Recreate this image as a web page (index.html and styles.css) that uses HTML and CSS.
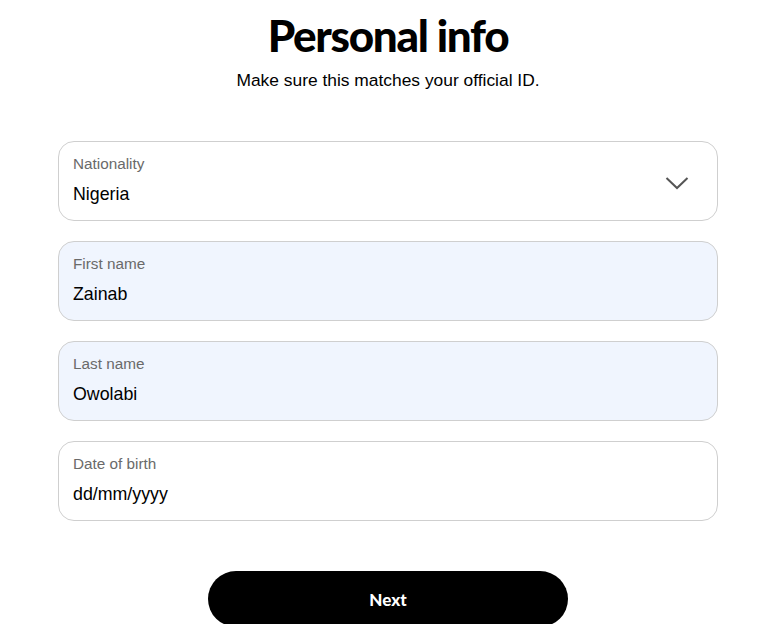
FILE: index.html
```html
<!DOCTYPE html>
<html lang="en">
<head>
<meta charset="utf-8">
<title>Personal info</title>
<link rel="stylesheet" href="styles.css">
</head>
<body>
<main class="page">
  <header class="intro">
    <h1 class="title">Personal info</h1>
    <p class="subtitle">Make sure this matches your official ID.</p>
  </header>
  <form class="form">
    <div class="field">
      <div class="field-text">
        <span class="label">Nationality</span>
        <span class="value">Nigeria</span>
      </div>
      <svg class="chevron" width="24" height="14" viewBox="0 0 24 14" aria-hidden="true">
        <path d="M1.5 2 L12 12 L22.5 2" fill="none" stroke="#555" stroke-width="2"/>
      </svg>
    </div>
    <div class="field filled">
      <div class="field-text">
        <span class="label">First name</span>
        <span class="value">Zainab</span>
      </div>
    </div>
    <div class="field filled">
      <div class="field-text">
        <span class="label">Last name</span>
        <span class="value">Owolabi</span>
      </div>
    </div>
    <div class="field">
      <div class="field-text">
        <span class="label">Date of birth</span>
        <span class="value">dd/mm/yyyy</span>
      </div>
    </div>
    <div class="actions">
      <button type="button" class="next">Next</button>
    </div>
  </form>
</main>
</body>
</html>
```

FILE: styles.css
```css
* { box-sizing: border-box; }
html, body { margin: 0; padding: 0; background: #fff; }
body {
  font-family: "Liberation Sans", Arial, sans-serif;
  color: #000;
  overflow: hidden;
}
.page {
  width: 660px;
  margin-left: 58px;
  display: flex;
  flex-direction: column;
}
.intro {
  display: flex;
  flex-direction: column;
  align-items: center;
  padding-top: 11px;
}
.title {
  margin: 0;
  font-family: "Lato", sans-serif;
  font-weight: 900;
  font-size: 44px;
  line-height: 48px;
  letter-spacing: -1.3px;
}
.subtitle {
  margin: 10px 0 0;
  font-size: 17.4px;
  line-height: 22px;
}
.form {
  margin-top: 50px;
  display: flex;
  flex-direction: column;
  gap: 20px;
}
.field {
  height: 80px;
  border: 1px solid #cfcfcf;
  border-radius: 16px;
  padding: 13px 28px 0 14px;
  display: flex;
  justify-content: space-between;
  align-items: flex-start;
  background: #fff;
}
.field.filled { background: #f0f5fe; }
.field-text {
  display: flex;
  flex-direction: column;
}
.label {
  font-size: 15.3px;
  line-height: 18px;
  color: #6a6a6a;
}
.value {
  margin-top: 10px;
  font-size: 17.8px;
  line-height: 22px;
  color: #000;
}
.chevron { margin-top: 21px; }
.actions {
  display: flex;
  justify-content: center;
  margin-top: 30px;
}
.next {
  width: 360px;
  height: 56px;
  border: none;
  border-radius: 28px;
  background: #000;
  color: #fff;
  font-family: "Lato", sans-serif;
  font-weight: 900;
  font-size: 17px;
}
```
